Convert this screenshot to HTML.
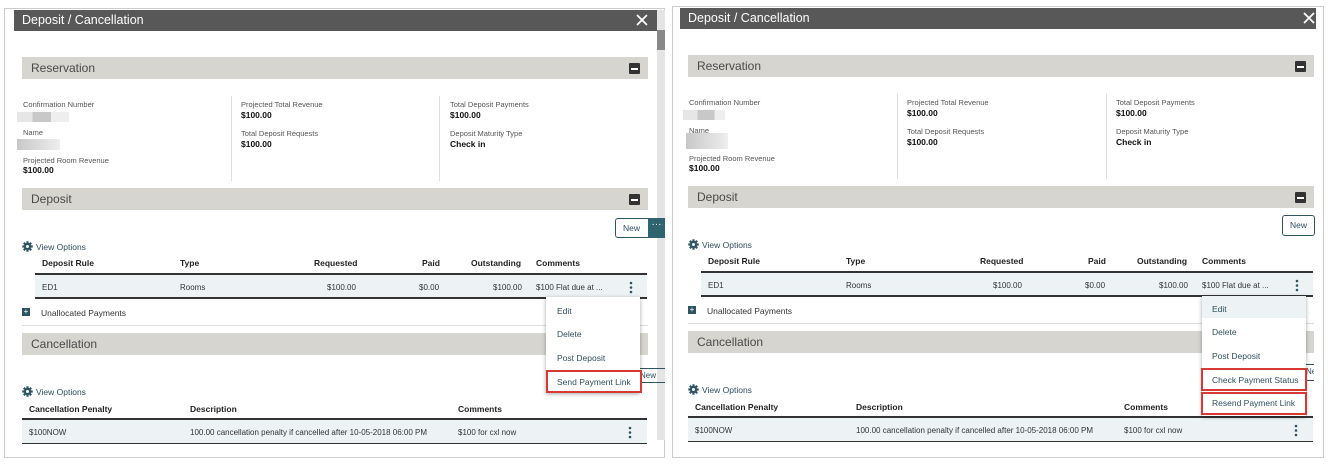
<!DOCTYPE html>
<html><head><meta charset="utf-8"><style>
*{margin:0;padding:0;box-sizing:border-box}
body{width:1328px;height:461px;background:#fff;position:relative;overflow:hidden;font-family:"Liberation Sans",sans-serif;color:#222}
.a{position:absolute;white-space:nowrap}
.p{position:absolute;width:670px;height:470px}
.hd{background:#585858;color:#fff;font-size:12.5px;padding:3px 0 0 8px;height:21px}
.bar{background:#d6d5d0;color:#4a4a4a;font-size:12px;height:22px;left:22px;width:626px;padding:4px 0 0 9px}
.min{position:absolute;right:8px;top:6px;width:11px;height:11px;background:#333;border-radius:1px}
.min:after{content:"";position:absolute;left:2px;top:4.5px;width:7px;height:2px;background:#fff}
.lb{font-size:7.5px;color:#555}
.v{font-size:8.5px;font-weight:bold;color:#111}
.th{font-size:8.5px;font-weight:bold;color:#222}
.td{font-size:8px;color:#333}
.vo{font-size:8.5px;color:#2d4f5c}
.vo svg{vertical-align:-2px;margin-right:3px}
.mi{font-size:8.5px;color:#2d4f5c}
</style></head><body>
<svg width="0" height="0" style="position:absolute">
<defs>
<g id="gear"><circle cx="5.5" cy="5.5" r="3.6" fill="#2d5463"/><g stroke="#2d5463" stroke-width="2.2"><line x1="5.5" y1="0.3" x2="5.5" y2="10.7"/><line x1="0.3" y1="5.5" x2="10.7" y2="5.5"/><line x1="1.8" y1="1.8" x2="9.2" y2="9.2"/><line x1="9.2" y1="1.8" x2="1.8" y2="9.2"/></g><circle cx="5.5" cy="5.5" r="1.5" fill="#fff"/></g>
<g id="dots" fill="#2d5463"><circle cx="2" cy="2" r="1.3"/><circle cx="2" cy="6.5" r="1.3"/><circle cx="2" cy="11" r="1.3"/></g>
<g id="x" stroke="#fff" stroke-width="1.8"><line x1="1" y1="1" x2="11" y2="11"/><line x1="11" y1="1" x2="1" y2="11"/></g>
</defs></svg>
<div class="a" style="left:4px;top:8px;width:661px;height:450px;border:1px solid #ccc"></div>
<div class="a" style="left:672px;top:6px;width:652px;height:452px;border:1px solid #ccc"></div>
<div class="a" style="left:657px;top:10px;width:8px;height:430px;background:#e4e4e4"></div>
<div class="a" style="left:657px;top:30px;width:8px;height:20px;background:#888"></div>

<!-- LEFT -->
<div class="p" style="left:0;top:0">
<div class="a hd" style="left:14px;top:10px;width:643px">Deposit / Cancellation</div>
<svg class="a" style="left:636px;top:14px" width="12" height="12"><use href="#x"/></svg>
<div class="a bar" style="top:57px">Reservation<div class="min"></div></div>
<div class="a lb" style="left:23px;top:100px">Confirmation Number</div>
<div class="a" style="left:17px;top:112px;width:52px;height:10px;background:linear-gradient(90deg,#e6e6e6 0 30%,#c8c8c8 30% 65%,#eee 65%)"></div>
<div class="a lb" style="left:23px;top:128px">Name</div>
<div class="a" style="left:17px;top:139px;width:43px;height:11px;background:linear-gradient(90deg,#c8c8c8,#eee)"></div>
<div class="a lb" style="left:23px;top:156px">Projected Room Revenue</div>
<div class="a v" style="left:23px;top:165px">$100.00</div>
<div class="a" style="left:231px;top:96px;width:1px;height:85px;background:#ddd"></div>
<div class="a" style="left:439px;top:96px;width:1px;height:85px;background:#ddd"></div>
<div class="a lb" style="left:241px;top:100px">Projected Total Revenue</div>
<div class="a v" style="left:241px;top:110px">$100.00</div>
<div class="a lb" style="left:241px;top:129px">Total Deposit Requests</div>
<div class="a v" style="left:241px;top:139px">$100.00</div>
<div class="a lb" style="left:450px;top:100px">Total Deposit Payments</div>
<div class="a v" style="left:450px;top:110px">$100.00</div>
<div class="a lb" style="left:450px;top:129px">Deposit Maturity Type</div>
<div class="a v" style="left:450px;top:139px">Check in</div>
<div class="a bar" style="top:188px">Deposit<div class="min"></div></div>
<div class="a" style="left:615px;top:218px;width:34px;height:20px;border:1.5px solid #2d5463;border-radius:3px 0 0 3px;font-size:8.5px;color:#2d4f5c;padding:4px 0 0 7px">New</div>
<div class="a" style="left:648px;top:218px;width:17px;height:20px;background:#2d6470;color:#fff;font-size:10px;text-align:center;line-height:14px">···</div>
<div class="a vo" style="left:22px;top:241px"><svg width="11" height="11"><use href="#gear"/></svg>View Options</div>
<div class="a th" style="left:42px;top:258px">Deposit Rule</div>
<div class="a th" style="left:180px;top:258px">Type</div>
<div class="a th" style="left:314px;top:258px">Requested</div>
<div class="a th" style="left:422px;top:258px">Paid</div>
<div class="a th" style="left:471px;top:258px">Outstanding</div>
<div class="a th" style="left:536px;top:258px">Comments</div>
<div class="a" style="left:35px;top:273px;width:612px;height:2px;background:#333"></div>
<div class="a" style="left:35px;top:275px;width:612px;height:24px;background:#edf3f5;border-bottom:2px solid #333"></div>
<div class="a td" style="left:42px;top:283px">ED1</div>
<div class="a td" style="left:180px;top:283px">Rooms</div>
<div class="a td" style="left:327px;top:283px">$100.00</div>
<div class="a td" style="left:419px;top:283px">$0.00</div>
<div class="a td" style="left:493px;top:283px">$100.00</div>
<div class="a td" style="left:536px;top:283px">$100 Flat due at ...</div>
<svg class="a" style="left:629px;top:281px" width="4" height="13"><use href="#dots"/></svg>
<div class="a" style="left:22px;top:308px;width:8px;height:8px;background:#2d5463;color:#fff;font-size:8px;line-height:8px;text-align:center">+</div>
<div class="a td" style="left:41px;top:308px;font-size:8.5px">Unallocated Payments</div>
<div class="a" style="left:22px;top:325px;width:626px;height:1px;background:#ddd"></div>
<div class="a bar" style="top:333px">Cancellation</div>
<div class="a" style="left:640px;top:368px;font-size:8px;color:#2d4f5c;border-top:1px solid #2d5463;border-bottom:1px solid #2d5463;width:25px;height:15px;padding:2px 0 0 0">New</div>
<div class="a vo" style="left:22px;top:386px"><svg width="11" height="11"><use href="#gear"/></svg>View Options</div>
<div class="a th" style="left:29px;top:404px">Cancellation Penalty</div>
<div class="a th" style="left:190px;top:404px">Description</div>
<div class="a th" style="left:458px;top:404px">Comments</div>
<div class="a" style="left:22px;top:418px;width:625px;height:2px;background:#333"></div>
<div class="a" style="left:22px;top:420px;width:625px;height:24px;background:#edf3f5;border-bottom:1px solid #333"></div>
<div class="a td" style="left:29px;top:428px">$100NOW</div>
<div class="a td" style="left:190px;top:428px">100.00 cancellation penalty if cancelled after 10-05-2018 06:00 PM</div>
<div class="a td" style="left:458px;top:428px">$100 for cxl now</div>
<svg class="a" style="left:628px;top:426px" width="4" height="13"><use href="#dots"/></svg>
<div class="a" style="left:546px;top:297px;width:94px;height:96px;background:#fff;box-shadow:0 1px 4px rgba(0,0,0,.35)"></div>
<div class="a mi" style="left:557px;top:306px">Edit</div>
<div class="a mi" style="left:557px;top:329px">Delete</div>
<div class="a mi" style="left:557px;top:353px">Post Deposit</div>
<div class="a" style="left:546px;top:370px;width:96px;height:23px;border:2.5px solid #d63a33"></div>
<div class="a mi" style="left:557px;top:377px">Send Payment Link</div>
</div>

<!-- RIGHT -->
<div class="p" style="left:666px;top:-2px">
<div class="a hd" style="left:14px;top:10px;width:636px">Deposit / Cancellation</div>
<svg class="a" style="left:637px;top:14px" width="12" height="12"><use href="#x"/></svg>
<div class="a bar" style="top:57px">Reservation<div class="min"></div></div>
<div class="a lb" style="left:23px;top:100px">Confirmation Number</div>
<div class="a" style="left:17px;top:112px;width:42px;height:10px;background:linear-gradient(90deg,#e6e6e6 0 35%,#c8c8c8 35% 75%,#eee 75%)"></div>
<div class="a lb" style="left:23px;top:128px">Name</div>
<div class="a" style="left:20px;top:135px;width:42px;height:16px;background:linear-gradient(90deg,#c8c8c8,#eee)"></div>
<div class="a lb" style="left:23px;top:156px">Projected Room Revenue</div>
<div class="a v" style="left:23px;top:165px">$100.00</div>
<div class="a" style="left:231px;top:96px;width:1px;height:85px;background:#ddd"></div>
<div class="a" style="left:440px;top:96px;width:1px;height:85px;background:#ddd"></div>
<div class="a lb" style="left:241px;top:100px">Projected Total Revenue</div>
<div class="a v" style="left:241px;top:110px">$100.00</div>
<div class="a lb" style="left:241px;top:129px">Total Deposit Requests</div>
<div class="a v" style="left:241px;top:139px">$100.00</div>
<div class="a lb" style="left:450px;top:100px">Total Deposit Payments</div>
<div class="a v" style="left:450px;top:110px">$100.00</div>
<div class="a lb" style="left:450px;top:129px">Deposit Maturity Type</div>
<div class="a v" style="left:450px;top:139px">Check in</div>
<div class="a bar" style="top:188px">Deposit<div class="min"></div></div>
<div class="a" style="left:616px;top:217px;width:33px;height:21px;border:1.5px solid #2d5463;border-radius:3px;font-size:8.5px;color:#2d4f5c;padding:4px 0 0 7px">New</div>
<div class="a vo" style="left:22px;top:241px"><svg width="11" height="11"><use href="#gear"/></svg>View Options</div>
<div class="a th" style="left:42px;top:258px">Deposit Rule</div>
<div class="a th" style="left:180px;top:258px">Type</div>
<div class="a th" style="left:314px;top:258px">Requested</div>
<div class="a th" style="left:422px;top:258px">Paid</div>
<div class="a th" style="left:471px;top:258px">Outstanding</div>
<div class="a th" style="left:536px;top:258px">Comments</div>
<div class="a" style="left:35px;top:273px;width:612px;height:2px;background:#333"></div>
<div class="a" style="left:35px;top:275px;width:612px;height:24px;background:#edf3f5;border-bottom:2px solid #333"></div>
<div class="a td" style="left:42px;top:283px">ED1</div>
<div class="a td" style="left:180px;top:283px">Rooms</div>
<div class="a td" style="left:327px;top:283px">$100.00</div>
<div class="a td" style="left:419px;top:283px">$0.00</div>
<div class="a td" style="left:493px;top:283px">$100.00</div>
<div class="a td" style="left:536px;top:283px">$100 Flat due at ...</div>
<svg class="a" style="left:629px;top:281px" width="4" height="13"><use href="#dots"/></svg>
<div class="a" style="left:22px;top:308px;width:8px;height:8px;background:#2d5463;color:#fff;font-size:8px;line-height:8px;text-align:center">+</div>
<div class="a td" style="left:41px;top:308px;font-size:8.5px">Unallocated Payments</div>
<div class="a" style="left:22px;top:325px;width:626px;height:1px;background:#ddd"></div>
<div class="a bar" style="top:333px">Cancellation</div>
<div class="a" style="left:640px;top:366px;font-size:8px;color:#2d4f5c;border-top:1px solid #2d5463;border-bottom:1px solid #2d5463;width:8px;height:17px;overflow:hidden;padding:2px 0 0 0">Ne</div>
<div class="a vo" style="left:22px;top:386px"><svg width="11" height="11"><use href="#gear"/></svg>View Options</div>
<div class="a th" style="left:29px;top:404px">Cancellation Penalty</div>
<div class="a th" style="left:190px;top:404px">Description</div>
<div class="a th" style="left:458px;top:404px">Comments</div>
<div class="a" style="left:22px;top:418px;width:625px;height:2px;background:#333"></div>
<div class="a" style="left:22px;top:420px;width:625px;height:24px;background:#edf3f5;border-bottom:1px solid #333"></div>
<div class="a td" style="left:29px;top:428px">$100NOW</div>
<div class="a td" style="left:190px;top:428px">100.00 cancellation penalty if cancelled after 10-05-2018 06:00 PM</div>
<div class="a td" style="left:458px;top:428px">$100 for cxl now</div>
<svg class="a" style="left:628px;top:426px" width="4" height="13"><use href="#dots"/></svg>
<div class="a" style="left:536px;top:298px;width:104px;height:120px;background:#fff;box-shadow:0 1px 4px rgba(0,0,0,.35)"></div>
<div class="a" style="left:536px;top:298px;width:104px;height:22px;background:#edf3f5"></div>
<div class="a mi" style="left:546px;top:306px">Edit</div>
<div class="a mi" style="left:546px;top:329px">Delete</div>
<div class="a mi" style="left:546px;top:353px">Post Deposit</div>
<div class="a" style="left:535px;top:370px;width:106px;height:23px;border:2.5px solid #d63a33"></div>
<div class="a mi" style="left:546px;top:377px">Check Payment Status</div>
<div class="a" style="left:535px;top:394px;width:106px;height:23px;border:2.5px solid #d63a33"></div>
<div class="a mi" style="left:546px;top:400px">Resend Payment Link</div>
</div>
</body></html>
